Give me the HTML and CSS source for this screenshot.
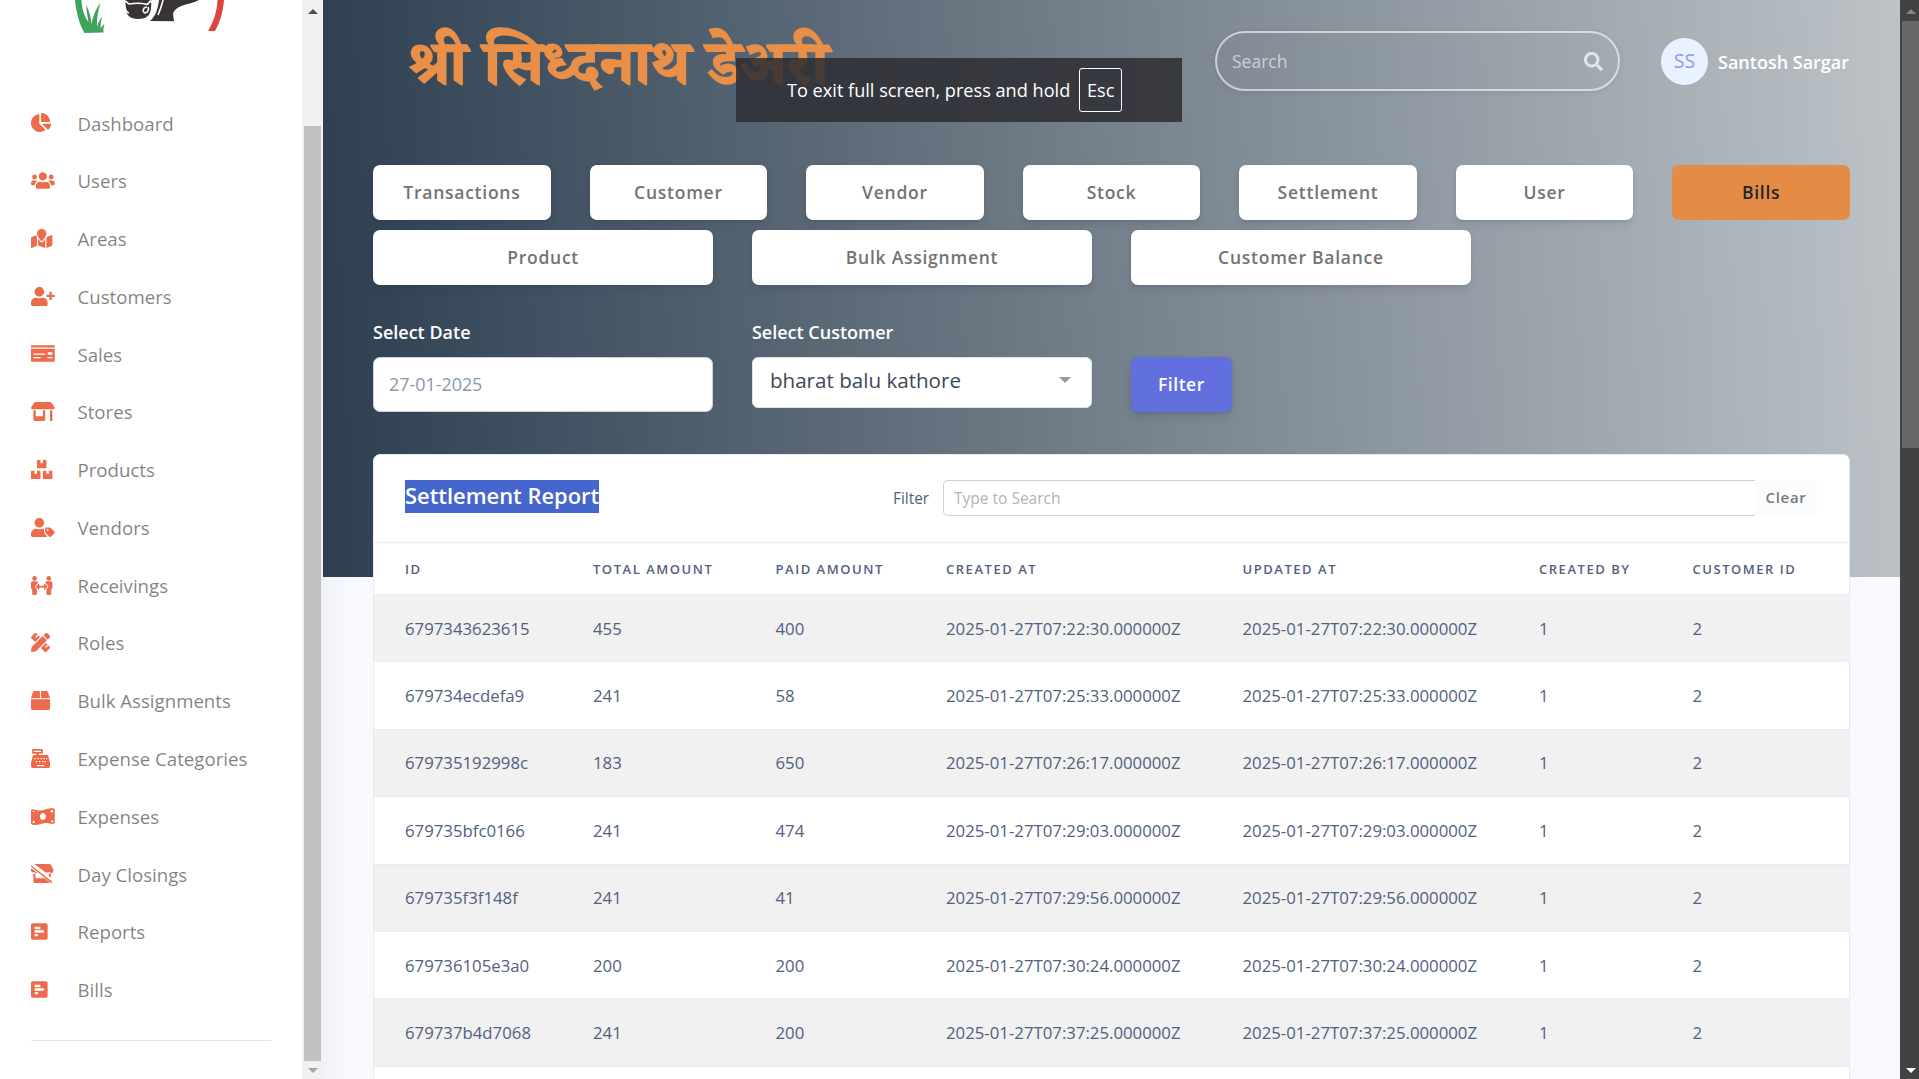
FILE: index.html
```html
<!DOCTYPE html>
<html lang="en">
<head>
<meta charset="utf-8">
<title>Bills</title>
<link rel="stylesheet" href="styles.css">
</head>
<body>
<div class="app">
  <aside class="sidebar">
    <svg class="logo" viewBox="0 0 180 36" width="180" height="36">
      <path fill="#3fa45b" d="M15 0h6.500c.5 9 3 17 7 22-1-6-2-12-2.500-17 3 5 5 12 5.500 19 1.500-7 4-15 9-21-2.500 8-4 16-3.500 24 1-4 3-8 5-10.500-1 4-1.500 8-1.500 12 1-2 2.500-3.500 4-4.500-1 3-1.200 5-1 8.500l-19 .5C20 26 16 12 15 0z"/>
      <path fill="#383436" d="M65 0h27l-1 7c0 8-4 12-13 12-8 0-12-4-12-10z"/>
      <path fill="#383436" d="M90 21c6-5 8-13 9-21h40c-9 5-23 4-26 14l1 7.300z"/>
      <path fill="none" stroke="#fff" stroke-width="1.600" d="M65 1c2 1 3 2.500 4 3 6-1 13-1 18 .5 2-1 3-3 4-4.500M65 6c0 4 1 6 4 7M87 7c-4 0-5 5-2 6 3 0 4-4 3-6M91 1c3 4 2 10-1 13M103 0c-1 5-3 10-5 15"/>
      <path fill="#dc4540" d="M157.500 0h6.500c-1 12-4 22-9 31h-7C154 21 157 11 157.500 0z"/>
    </svg>
    <nav class="nav">
      <a class="item"><svg class="ic" preserveAspectRatio="xMinYMid" viewBox="0 0 544 512"><path d="M527.790 288H290.500l158.030 158.030c6.040 6.040 15.980 6.530 22.190.68 38.700-36.460 65.320-85.610 73.130-140.860 1.340-9.460-6.510-17.850-16.060-17.850zm-15.830-64.800C503.720 103.740 408.260 8.280 288.800.04 279.680-.59 272 7.100 272 16.240V240h223.770c9.140 0 16.820-7.680 16.190-16.800zM224 288V50.710c0-9.550-8.390-17.400-17.840-16.060C86.990 51.490-4.100 155.600.14 280.370 4.500 408.510 114.830 513.590 243.030 511.980c50.400-.63 96.970-16.870 135.260-44.030 7.900-5.600 8.420-17.230 1.570-24.080L224 288z"/></svg><span>Dashboard</span></a>
      <a class="item"><svg class="ic" preserveAspectRatio="xMinYMid" viewBox="0 0 640 512"><path d="M96 224c35.300 0 64-28.700 64-64s-28.700-64-64-64-64 28.700-64 64 28.700 64 64 64zm448 0c35.300 0 64-28.700 64-64s-28.700-64-64-64-64 28.700-64 64 28.700 64 64 64zm32 32h-64c-17.600 0-33.500 7.100-45.100 18.600 40.300 22.100 68.900 62 75.100 109.400h66c17.700 0 32-14.300 32-32v-32c0-35.300-28.700-64-64-64zm-256 0c61.900 0 112-50.100 112-112S381.900 32 320 32 208 82.100 208 144s50.100 112 112 112zm76.800 32h-8.300c-20.800 10-43.900 16-68.500 16s-47.600-6-68.500-16h-8.300C179.600 288 128 339.600 128 403.200V432c0 26.500 21.500 48 48 48h288c26.500 0 48-21.500 48-48v-28.800c0-63.600-51.600-115.200-115.200-115.200zm-223.700-13.400C161.500 263.100 145.600 256 128 256H64c-35.300 0-64 28.700-64 64v32c0 17.700 14.300 32 32 32h65.900c6.300-47.400 34.900-87.300 75.200-109.400z"/></svg><span>Users</span></a>
      <a class="item"><svg class="ic" preserveAspectRatio="xMinYMid" viewBox="0 0 576 512"><path d="M288 0c-69.590 0-126 56.410-126 126 0 56.260 82.350 158.800 113.900 196.020 6.390 7.540 17.820 7.540 24.200 0C331.650 284.800 414 182.260 414 126 414 56.410 357.590 0 288 0zM20.120 215.950A32.006 32.006 0 0 0 0 245.660v250.320c0 11.320 11.430 19.060 21.940 14.860L160 448V214.920c-8.840-15.980-16.070-31.540-21.250-46.420L20.120 215.950zM288 359.670c-14.070 0-27.380-6.180-36.510-16.960-19.660-23.200-40.570-49.620-59.490-76.720v182l192 64V266c-18.920 27.090-39.820 53.520-59.490 76.720-9.130 10.770-22.440 16.950-36.510 16.950zm266.060-198.510L416 224v288l139.880-55.950A31.996 31.996 0 0 0 576 426.340V176.020c0-11.320-11.430-19.060-21.940-14.860z"/></svg><span>Areas</span></a>
      <a class="item"><svg class="ic" preserveAspectRatio="xMinYMid" viewBox="0 0 640 512"><path d="M624 208h-64v-64c0-8.800-7.200-16-16-16h-32c-8.800 0-16 7.200-16 16v64h-64c-8.800 0-16 7.200-16 16v32c0 8.800 7.200 16 16 16h64v64c0 8.800 7.200 16 16 16h32c8.800 0 16-7.200 16-16v-64h64c8.800 0 16-7.200 16-16v-32c0-8.800-7.200-16-16-16zm-400 48c70.700 0 128-57.300 128-128S294.700 0 224 0 96 57.300 96 128s57.300 128 128 128zm89.600 32h-16.700c-22.200 10.200-46.900 16-72.900 16s-50.600-5.800-72.900-16h-16.700C60.200 288 0 348.200 0 422.400V464c0 26.500 21.500 48 48 48h352c26.500 0 48-21.500 48-48v-41.600c0-74.200-60.200-134.400-134.400-134.400z"/></svg><span>Customers</span></a>
      <a class="item"><svg class="ic" preserveAspectRatio="xMinYMid" viewBox="0 0 640 512"><path d="M0 448c0 17.670 14.330 32 32 32h576c17.670 0 32-14.330 32-32V128H0v320zm448-208c0-8.840 7.160-16 16-16h96c8.840 0 16 7.160 16 16v32c0 8.840-7.160 16-16 16h-96c-8.840 0-16-7.160-16-16v-32zm0 120c0-4.420 3.580-8 8-8h112c4.420 0 8 3.580 8 8v16c0 4.420-3.580 8-8 8H456c-4.420 0-8-3.580-8-8v-16zM64 264c0-4.420 3.580-8 8-8h304c4.420 0 8 3.580 8 8v16c0 4.420-3.580 8-8 8H72c-4.420 0-8-3.580-8-8v-16zm0 96c0-4.420 3.580-8 8-8h176c4.420 0 8 3.580 8 8v16c0 4.420-3.580 8-8 8H72c-4.420 0-8-3.580-8-8v-16zM624 32H16C7.160 32 0 39.160 0 48v48h640V48c0-8.840-7.160-16-16-16z"/></svg><span>Sales</span></a>
      <a class="item"><svg class="ic" preserveAspectRatio="xMinYMid" viewBox="0 0 640 512"><path d="M320 384H128V224H64v256c0 17.700 14.300 32 32 32h256c17.700 0 32-14.300 32-32V224h-64v160zm314.600-241.800l-85.300-128c-6-8.900-16-14.200-26.700-14.200H117.400c-10.700 0-20.700 5.300-26.600 14.200l-85.300 128c-14.200 21.300 1 49.800 26.600 49.800H608c25.500 0 40.700-28.500 26.600-49.800zM512 496c0 8.800 7.200 16 16 16h32c8.800 0 16-7.200 16-16V224h-64v272z"/></svg><span>Stores</span></a>
      <a class="item"><svg class="ic" preserveAspectRatio="xMinYMid" viewBox="0 0 576 512"><path d="M560 288h-80v96l-32-21.300-32 21.300v-96h-80c-8.800 0-16 7.200-16 16v192c0 8.800 7.200 16 16 16h224c8.800 0 16-7.200 16-16V304c0-8.800-7.200-16-16-16zm-384-64h224c8.800 0 16-7.200 16-16V16c0-8.800-7.200-16-16-16h-80v96l-32-21.300L256 96V0h-80c-8.800 0-16 7.200-16 16v192c0 8.800 7.200 16 16 16zm64 64h-80v96l-32-21.300L96 384v-96H16c-8.800 0-16 7.200-16 16v192c0 8.800 7.200 16 16 16h224c8.800 0 16-7.200 16-16V304c0-8.800-7.200-16-16-16z"/></svg><span>Products</span></a>
      <a class="item"><svg class="ic" preserveAspectRatio="xMinYMid" viewBox="0 0 640 512"><path d="M630.600 364.900l-90.300-90.200c-12-12-28.300-18.700-45.300-18.700h-79.300c-17.700 0-32 14.300-32 32v79.200c0 17 6.700 33.200 18.700 45.200l90.300 90.200c12.500 12.500 32.800 12.500 45.300 0l92.500-92.500c12.600-12.500 12.600-32.700.1-45.200zm-182.800-21c-13.300 0-24-10.700-24-24s10.700-24 24-24 24 10.700 24 24c0 13.200-10.700 24-24 24zm-223.800-88c70.700 0 128-57.300 128-128C352 57.300 294.700 0 224 0S96 57.300 96 128c0 70.600 57.300 127.900 128 127.900zm127.800 111.200V294c-12.200-3.600-24.900-6.200-38.200-6.200h-16.700c-22.200 10.200-46.900 16-72.900 16s-50.600-5.800-72.900-16h-16.700C60.200 287.900 0 348.100 0 422.300v41.600c0 26.500 21.500 48 48 48h352c15.500 0 29.100-7.500 37.900-18.900l-58-58c-18.100-18.100-28.100-42.200-28.100-67.900z"/></svg><span>Vendors</span></a>
      <a class="item"><svg class="ic" preserveAspectRatio="xMinYMid" viewBox="0 0 576 512"><path d="M96 0a64 64 0 1 1 0 128A64 64 0 1 1 96 0zM480 0a64 64 0 1 1 0 128A64 64 0 1 1 480 0zM48 144h96c24 0 42 16 46 38l-68 76c-14 16-14 40 0 56l38 42v124c0 18-14 32-32 32H64c-18 0-32-14-32-32V352C14 350 0 338 0 320V192c0-27 21-48 48-48zM528 144h-96c-24 0-42 16-46 38l68 76c14 16 14 40 0 56l-38 42v124c0 18 14 32 32 32h64c18 0 32-14 32-32V352c18-2 32-14 32-32V192c0-27-21-48-48-48zM210 208c11 0 16 8 16 16v38h124v-38c0-14 17-21 27-11l64 64c6 6 6 15 0 21l-64 64c-10 10-27 3-27-11v-41H226v41c0 14-17 21-27 11l-64-64c-6-6-6-15 0-21l64-64z"/></svg><span>Receivings</span></a>
      <a class="item"><svg class="ic" preserveAspectRatio="xMinYMid" viewBox="0 0 512 512"><path d="M109.460 244.040l134.580-134.560-44.120-44.120-61.680 61.680a7.919 7.919 0 0 1-11.210 0l-11.210-11.210c-3.100-3.100-3.100-8.120 0-11.210l61.680-61.680-33.640-33.650C131.470-3.100 111.390-3.100 99 9.290L9.290 99c-12.380 12.390-12.390 32.470 0 44.860l100.170 100.180zm388.470-116.800c18.760-18.760 18.750-49.170 0-67.930l-45.250-45.250c-18.760-18.760-49.180-18.760-67.950 0l-46.020 46.010 113.200 113.200 46.020-46.030zM316.080 82.710l-297 296.960L.32 487.110c-2.530 14.490 10.090 27.110 24.590 24.560l107.450-18.840L429.280 195.900 316.080 82.710zm186.630 285.430l-33.640-33.640-61.680 61.680c-3.100 3.100-8.120 3.100-11.210 0l-11.210-11.210c-3.090-3.100-3.090-8.120 0-11.210l61.680-61.680-44.140-44.140L267.930 402.500l100.210 100.200c12.390 12.390 32.470 12.390 44.860 0l89.710-89.700c12.390-12.390 12.390-32.470 0-44.860z"/></svg><span>Roles</span></a>
      <a class="item"><svg class="ic" preserveAspectRatio="xMinYMid" viewBox="0 0 512 512"><path d="M509.500 184.600L458.900 32.800C452.400 13.200 434.100 0 413.400 0H272v192h238.700c-.4-2.500-.4-5-1.200-7.400zM240 0H98.600c-20.700 0-39 13.200-45.500 32.800L2.500 184.600c-.8 2.400-.8 4.900-1.200 7.400H240V0zM0 224v240c0 26.500 21.500 48 48 48h416c26.500 0 48-21.500 48-48V224H0z"/></svg><span>Bulk Assignments</span></a>
      <a class="item"><svg class="ic" preserveAspectRatio="xMinYMid" viewBox="0 0 512 512"><path fill-rule="evenodd" d="M48 0h256c9 0 16 7 16 16v96c0 9-7 16-16 16h-96v32h226c16 0 29 12 31 27l44 180c2 7 3 13 3 20v77c0 26-22 48-48 48H48c-26 0-48-22-48-48v-77c0-7 1-13 3-20l44-180c2-15 15-27 31-27h66v-32H48c-9 0-16-7-16-16V16C32 7 39 0 48 0zm32 48v32h192V48zM88 240v34h36v-34zm86 0v34h36v-34zm82 0v34h36v-34zm82 0v34h36v-34zm68 0v34h30v-34zM132 320v34h36v-34zm82 0v34h36v-34zm82 0v34h36v-34zm70 0v34h30v-34zM160 432v32h192v-32z"/></svg><span>Expense Categories</span></a>
      <a class="item"><svg class="ic" preserveAspectRatio="xMinYMid" viewBox="0 0 640 512"><path fill-rule="evenodd" d="M621 42C580 26 529 31 480 43c-96 24-192 68-320 43C120 78 80 66 48 62 20 58 0 80 0 104v322c0 18 8 36 24 44 50 22 96 16 136 10 106-16 212-72 320-42 36 10 76 22 108 14 32-6 52-18 52-44V88c0-20-6-40-19-46zM48 132c28 6 50 4 54-8l-6-12c-18-2-34-4-48-6zm0 232v58c20 8 42 8 60 6-2-36-28-62-60-64zM320 352c-44 0-80-43-80-96s36-96 80-96 80 43 80 96-36 96-80 96zm212-230c10 22 36 32 60 28V88c-20-4-46-4-60 0zm60 236c-30 2-52 16-56 44 20 6 40 6 56 2z"/></svg><span>Expenses</span></a>
      <a class="item"><svg class="ic" preserveAspectRatio="xMinYMid" viewBox="0 0 600 512"><path d="M90 0h410c14 0 26 8 32 18l60 110c26 46 8 108-46 112-30 2-52-14-68-30-24 26-64 28-88 12L90 0zM0 34l560 430c8 7 14 14 8 24l-10 18c-6 8-14 8-22 2L0 72zM0 112l170 126c-28 12-70 6-88-20-28 14-64 2-76-24-10-24-12-54-6-82zM64 262h56v122h244l132 98v30H96c-18 0-32-14-32-32V262zM480 262h56v102l-56-44v-58z"/></svg><span>Day Closings</span></a>
      <a class="item"><svg class="ic" preserveAspectRatio="xMinYMid" viewBox="0 0 448 512"><path d="M448 432V80c0-26.500-21.500-48-48-48H48C21.500 32 0 53.500 0 80v352c0 26.500 21.500 48 48 48h352c26.500 0 48-21.500 48-48zM112 192c-8.840 0-16-7.160-16-16v-32c0-8.840 7.160-16 16-16h128c8.840 0 16 7.160 16 16v32c0 8.840-7.160 16-16 16H112zm0 96c-8.840 0-16-7.160-16-16v-32c0-8.840 7.160-16 16-16h224c8.840 0 16 7.160 16 16v32c0 8.840-7.160 16-16 16H112zm0 96c-8.840 0-16-7.160-16-16v-32c0-8.840 7.160-16 16-16h64c8.840 0 16 7.160 16 16v32c0 8.840-7.160 16-16 16h-64z"/></svg><span>Reports</span></a>
      <a class="item"><svg class="ic" preserveAspectRatio="xMinYMid" viewBox="0 0 448 512"><path d="M448 432V80c0-26.500-21.500-48-48-48H48C21.500 32 0 53.500 0 80v352c0 26.500 21.500 48 48 48h352c26.500 0 48-21.500 48-48zM112 192c-8.840 0-16-7.160-16-16v-32c0-8.840 7.160-16 16-16h128c8.840 0 16 7.160 16 16v32c0 8.840-7.160 16-16 16H112zm0 96c-8.840 0-16-7.160-16-16v-32c0-8.840 7.160-16 16-16h224c8.840 0 16 7.160 16 16v32c0 8.840-7.160 16-16 16H112zm0 96c-8.840 0-16-7.160-16-16v-32c0-8.840 7.160-16 16-16h64c8.840 0 16 7.160 16 16v32c0 8.840-7.160 16-16 16h-64z"/></svg><span>Bills</span></a>
    </nav>
    <hr class="rule">
  </aside>
  <div class="bar bar-light"><i class="arrow up"></i><i class="thumb"></i><i class="arrow down"></i></div>
  <main class="main">
    <header class="top">
      <h1 class="brand" lang="mr">श्री सिध्दनाथ डेअरी</h1>
      <div class="search"><span>Search</span>
        <svg viewBox="0 0 512 512" width="19" height="19"><path d="M505 442.700L405.300 343c-4.500-4.500-10.600-7-17-7H372c27.600-35.300 44-79.700 44-128C416 93.100 322.900 0 208 0S0 93.100 0 208s93.100 208 208 208c48.300 0 92.700-16.400 128-44v16.300c0 6.400 2.500 12.500 7 17l99.700 99.700c9.400 9.400 24.600 9.400 33.900 0l28.300-28.300c9.400-9.400 9.400-24.600.1-34zM208 336c-70.700 0-128-57.200-128-128 0-70.700 57.200-128 128-128 70.700 0 128 57.200 128 128 0 70.700-57.200 128-128 128z"/></svg>
      </div>
      <div class="avatar">SS</div>
      <div class="user">Santosh Sargar</div>
    </header>
    <div class="tabs seven">
      <a class="tab">Transactions</a><a class="tab">Customer</a><a class="tab">Vendor</a><a class="tab">Stock</a><a class="tab">Settlement</a><a class="tab">User</a><a class="tab active">Bills</a>
    </div>
    <div class="tabs four">
      <a class="tab">Product</a><a class="tab">Bulk Assignment</a><a class="tab">Customer Balance</a>
    </div>
    <div class="filters">
      <div class="field"><label>Select Date</label><div class="date">27-01-2025</div></div>
      <div class="field"><label>Select Customer</label><div class="select"><span>bharat balu kathore</span><i></i></div></div>
      <button class="go">Filter</button>
    </div>
    <section class="card">
      <div class="card-head">
        <h3><span>Settlement Report</span></h3>
        <span class="flabel">Filter</span>
        <div class="finput">Type to Search</div>
        <span class="clear">Clear</span>
      </div>
      <table>
        <colgroup><col class="c1"><col class="c2"><col class="c3"><col class="c4"><col class="c4"><col class="c5"><col></colgroup>
        <thead><tr><th>ID</th><th>Total Amount</th><th>Paid Amount</th><th>Created At</th><th>Updated At</th><th>Created By</th><th>Customer ID</th></tr></thead>
        <tbody>
          <tr><td>6797343623615</td><td>455</td><td>400</td><td>2025-01-27T07:22:30.000000Z</td><td>2025-01-27T07:22:30.000000Z</td><td>1</td><td>2</td></tr>
          <tr><td>679734ecdefa9</td><td>241</td><td>58</td><td>2025-01-27T07:25:33.000000Z</td><td>2025-01-27T07:25:33.000000Z</td><td>1</td><td>2</td></tr>
          <tr><td>679735192998c</td><td>183</td><td>650</td><td>2025-01-27T07:26:17.000000Z</td><td>2025-01-27T07:26:17.000000Z</td><td>1</td><td>2</td></tr>
          <tr><td>679735bfc0166</td><td>241</td><td>474</td><td>2025-01-27T07:29:03.000000Z</td><td>2025-01-27T07:29:03.000000Z</td><td>1</td><td>2</td></tr>
          <tr><td>679735f3f148f</td><td>241</td><td>41</td><td>2025-01-27T07:29:56.000000Z</td><td>2025-01-27T07:29:56.000000Z</td><td>1</td><td>2</td></tr>
          <tr><td>679736105e3a0</td><td>200</td><td>200</td><td>2025-01-27T07:30:24.000000Z</td><td>2025-01-27T07:30:24.000000Z</td><td>1</td><td>2</td></tr>
          <tr><td>679737b4d7068</td><td>241</td><td>200</td><td>2025-01-27T07:37:25.000000Z</td><td>2025-01-27T07:37:25.000000Z</td><td>1</td><td>2</td></tr>
        </tbody>
      </table>
    </section>
  </main>
  <div class="bar bar-dark"><i class="arrow up"></i><i class="thumb"></i><i class="arrow down"></i></div>
  <div class="toast">To exit full screen, press and hold <kbd>Esc</kbd></div>
</div>
</body>
</html>
```
FILE: styles.css
```css
* { box-sizing: border-box; }
body {
  margin: 0;
  font-family: "Open Sans", "Noto Sans", sans-serif;
  color: #525f7f;
  background: #f8f9fe;
}
.app {
  position: relative;
  display: grid;
  grid-template-columns: 302px 21px 1577px 19px;
  height: 1079px;
  overflow: hidden;
}

/* sidebar */
.sidebar { background: #fff; height: 1079px; padding-left: 31px; }
.logo { display: block; margin-left: 29px; }
.nav { margin-top: 58px; }
.item {
  display: flex;
  align-items: center;
  height: 57.780px;
  font-size: 18.650px;
  color: rgba(0, 0, 0, .5);
}
.item span { padding-top: .4px; }
.ic { height: 19px; width: 46.500px; flex: none; fill: #eb6b4a; }
.rule { width: 240px; height: 1px; margin: 22px 0 0; border: 0; background: #e4e4e4; }

/* scrollbars */
.bar { display: flex; flex-direction: column; align-items: center; height: 1079px; }
.arrow { width: 0; height: 0; border: 5px solid transparent; }
.up { border-top: 0; border-bottom-color: #505050; margin-top: 9px; }
.down { border-bottom: 0; border-top-color: #a3a3a3; margin: auto 0 6px; }
.bar-light { background: #f1f1f1; }
.bar-light .thumb { width: 17px; height: 935px; margin-top: 112px; background: #c1c1c1; }
.bar-dark { background: #424242; padding-left: 2px; }
.bar-dark .up { border-bottom-color: #868686; }
.bar-dark .down { border-top-color: #fff; }
.bar-dark .thumb { width: 17px; height: 427px; margin-top: 7px; background: #686868; }

/* page */
.main {
  padding: 0 50px;
  height: 1079px;
  background:
    linear-gradient(87deg, #2c3e50, #bdc3c7) 0 0 / 100% 577px no-repeat,
    linear-gradient(90deg, #f0f2f8, #f8f9fe 26px);
  overflow: hidden;
}
.top { display: flex; align-items: center; height: 122px; padding-left: 34px; }
.brand {
  margin: 0 auto 0 0;
  padding-top: 27px;
  font: 700 62px/1 "Noto Serif Devanagari", "Noto Sans Devanagari", serif;
  color: #e98f47;
  white-space: nowrap;
  -webkit-text-stroke: 1.600px #e98f47;
}
.search {
  display: flex;
  align-items: center;
  justify-content: space-between;
  width: 405px;
  height: 60px;
  padding: 0 15px;
  border: 2px solid rgba(255, 255, 255, .6);
  border-radius: 30px;
  font-size: 17.500px;
  color: rgba(255, 255, 255, .6);
  box-shadow: 0 1px 4px rgba(50, 50, 93, .15);
}
.search svg { fill: rgba(255, 255, 255, .7); }
.avatar {
  width: 47px;
  height: 47px;
  margin-left: 41px;
  border-radius: 50%;
  background: #ebf2ff;
  color: #8b9cf0;
  font-size: 19.500px;
  line-height: 46px;
  text-align: center;
}
.user { margin-left: 10px; width: 132px; font-size: 18px; font-weight: 600; color: #fff; white-space: nowrap; padding-top: 2px; }

.tabs { display: grid; column-gap: 38.750px; }
.seven { grid-template-columns: repeat(7, 1fr); margin-top: 43px; }
.four { grid-template-columns: repeat(4, 1fr); margin-top: 10px; }
.tab {
  height: 55px;
  border-radius: 7px;
  background: #fff;
  color: #737373;
  font-size: 17.500px;
  font-weight: 600;
  letter-spacing: .75px;
  line-height: 54px;
  text-align: center;
  box-shadow: 0 5px 7px rgba(50, 50, 93, .11), 0 1px 3px rgba(0, 0, 0, .08);
}
.active { background: #e48b45; color: #212529; box-shadow: none; }

.filters { display: flex; column-gap: 38.750px; height: 169px; padding-top: 34px; }
.field { width: 340.200px; }
label { display: block; height: 38px; font-size: 18px; font-weight: 600; line-height: 26px; color: #fff; }
.date {
  height: 55px;
  padding-left: 15px;
  border: 1px solid #cad1d7;
  border-radius: 7px;
  background: #fff;
  color: #8898aa;
  font-size: 17.900px;
  line-height: 53px;
}
.select {
  display: flex;
  align-items: center;
  justify-content: space-between;
  height: 51px;
  padding: 0 20px 5px 17px;
  border: 1px solid #dee2e6;
  border-radius: 6px;
  background: #fff;
  color: #3c4858;
  font-size: 20.600px;
}
.select i { border: 6px solid transparent; border-top-color: #999; border-bottom: 0; }
.go {
  width: 101px;
  height: 55px;
  margin-top: 38px;
  padding: 0 0 2px;
  border: 0;
  border-radius: 7px;
  background: #626fdf;
  color: #fff;
  font: 600 17.500px "Open Sans", sans-serif;
  letter-spacing: .5px;
  box-shadow: 0 5px 7px rgba(50, 50, 93, .15), 0 1px 3px rgba(0, 0, 0, .1);
}

/* report card */
.card { height: 700px; border: 1px solid #e9ecef; border-radius: 7px; background: #fff; overflow: hidden; }
.card-head { display: flex; align-items: flex-start; height: 87px; padding: 25px 32px 0 31px; }
h3 { width: 488px; margin: 0; font-size: 21.900px; font-weight: 600; line-height: 32px; }
h3 span { display: inline-block; height: 33px; background: #4566cd; color: #fff; white-space: nowrap; }
.flabel { width: 50px; font-size: 15.400px; line-height: 37px; }
.finput {
  flex: 1;
  height: 36px;
  padding-left: 10px;
  border: 1px solid #cad1d7;
  border-right: 0;
  border-radius: 5px 0 0 5px;
  color: #adb5bd;
  font-size: 15.500px;
  line-height: 35px;
}
.clear { width: 62px; height: 36px; border-radius: 0 5px 5px 0; background: #fbfcfe; color: #7a7a7a; font-size: 15px; font-weight: 600; letter-spacing: .7px; line-height: 35px; text-align: center; }
table { width: 100%; border-collapse: collapse; table-layout: fixed; }
.c1 { width: 188px; }
.c2 { width: 182.500px; }
.c3 { width: 170.500px; }
.c4 { width: 296.500px; }
.c5 { width: 153.500px; }
th, td { padding: 0 0 0 31px; text-align: left; white-space: nowrap; border-top: 1px solid #e9ecef; }
th { height: 52px; font-size: 13px; font-weight: 600; letter-spacing: 1.530px; text-transform: uppercase; }
td { height: 67.400px; font-size: 16.770px; }
tbody tr:nth-child(odd) { background: #f1f1f1; }
tbody tr:last-child { border-bottom: 1px solid #e9ecef; }

/* browser notice over the page */
.toast {
  position: absolute;
  left: 736px;
  top: 58px;
  display: flex;
  align-items: center;
  gap: 9px;
  width: 446px;
  height: 64px;
  padding-left: 51px;
  background: rgba(45, 45, 51, .86);
  color: #fff;
  font: 18.150px "Open Sans", sans-serif;
  white-space: nowrap;
}
.toast kbd { width: 43px; height: 44px; border: 1.500px solid #fff; border-radius: 3px; font: inherit; line-height: 42px; text-align: center; }
```
